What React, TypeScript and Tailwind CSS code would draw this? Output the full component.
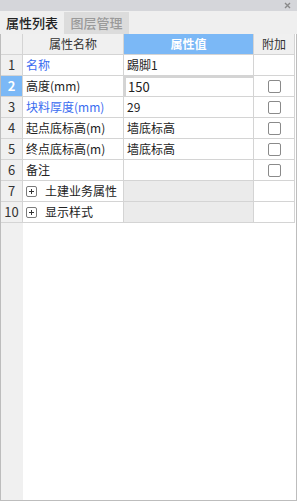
import React from 'react';

type Row = {
  no: string;
  name: string;
  value?: string;
  blue?: boolean;
  check?: boolean;
  group?: boolean;
  active?: boolean;
};

const ROWS: Row[] = [
  { no: '1', name: '名称', value: '踢脚1', blue: true },
  { no: '2', name: '高度(mm)', value: '150', check: true, active: true },
  { no: '3', name: '块料厚度(mm)', value: '29', blue: true, check: true },
  { no: '4', name: '起点底标高(m)', value: '墙底标高', check: true },
  { no: '5', name: '终点底标高(m)', value: '墙底标高', check: true },
  { no: '6', name: '备注', value: '', check: true },
  { no: '7', name: '土建业务属性', group: true },
  { no: '10', name: '显示样式', group: true },
];

const font = { fontFamily: '"Noto Sans CJK SC", "Noto Sans", sans-serif' };

const Checkbox = () => (
  <div className="w-[13px] h-[13px] border border-[#8a8a8a] rounded-[2px] bg-white" />
);

const PlusBox = () => (
  <svg width="11" height="11" viewBox="0 0 11 11" className="shrink-0">
    <rect x="0.5" y="0.5" width="10" height="10" rx="1.5" fill="white" stroke="#7a7a7a" />
    <path d="M3 5.5h5M5.5 3v5" stroke="#333" strokeWidth="1" />
  </svg>
);

const App: React.FC = () => {
  return (
    <div className="w-[297px] h-[501px] flex flex-col bg-white text-[12px] text-[#222]" style={font}>
      {/* title bar */}
      <div className="h-[11px] bg-[#d5d6da] flex items-center justify-end pr-[6px]">
        <svg width="7" height="7" viewBox="0 0 7 7">
          <path d="M1 1l5 5M6 1l-5 5" stroke="#8a8a8a" strokeWidth="1.4" />
        </svg>
      </div>

      {/* tabs */}
      <div className="h-[23px] bg-[#efefef] flex items-end">
        <div className="h-[23px] w-[64px] flex items-center justify-center text-[#222] text-[13px] font-medium">属性列表</div>
        <div className="h-[22px] w-[65px] bg-[#dcdcdc] flex items-center justify-center text-[#9a9a9a] text-[13px] font-medium">图层管理</div>
      </div>

      {/* table */}
      <div className="flex-1 flex flex-col border-l border-r border-b border-[#bdbdbd] pr-px">
        <div className="grid grid-cols-[22px_101px_130px_41px] grid-rows-[21px] auto-rows-[21px]">
          <div className="bg-[#f0f0f0] border-r border-b border-[#d4d4d4]" />
          <div className="bg-[#f0f0f0] border-r border-b border-[#d4d4d4] flex items-center justify-center text-[#333]">属性名称</div>
          <div className="bg-[#7bb8f6] border-r border-b border-[#d4d4d4] flex items-center justify-center text-white font-bold">属性值</div>
          <div className="bg-[#f0f0f0] border-r border-b border-[#d4d4d4] flex items-center justify-center text-[#333]">附加</div>

          {ROWS.map(r => (
            <React.Fragment key={r.no}>
              <div
                className={`border-r border-b border-[#d4d4d4] flex items-center justify-center text-[13px] ${
                  r.active ? 'bg-[#7bb8f6] text-white font-bold' : 'bg-[#f0f0f0] text-[#333]'
                }`}
              >
                {r.no}
              </div>
              <div className="border-r border-b border-[#d4d4d4] flex items-center pl-[3px] whitespace-nowrap overflow-hidden">
                {r.group ? (
                  <div className="flex items-center gap-[8px]">
                    <PlusBox />
                    <span>{r.name}</span>
                  </div>
                ) : (
                  <span className={r.blue ? 'text-[#3a6cf0]' : ''}>{r.name}</span>
                )}
              </div>
              <div
                className={`border-r border-b border-[#d4d4d4] flex items-center whitespace-nowrap ${
                  r.group ? 'bg-[#ebebeb]' : ''
                } ${r.active ? 'border-2 border-[#7a7a7a] pl-[2px] text-[13px]' : 'pl-[3px]'}`}
              >
                {r.value}
              </div>
              <div className="border-r border-b border-[#d4d4d4] flex items-center justify-center">
                {r.check && <Checkbox />}
              </div>
            </React.Fragment>
          ))}
        </div>
        <div className="flex-1 flex">
          <div className="w-[22px] bg-[#f0f0f0]" />
        </div>
      </div>
    </div>
  );
};

export default App;
